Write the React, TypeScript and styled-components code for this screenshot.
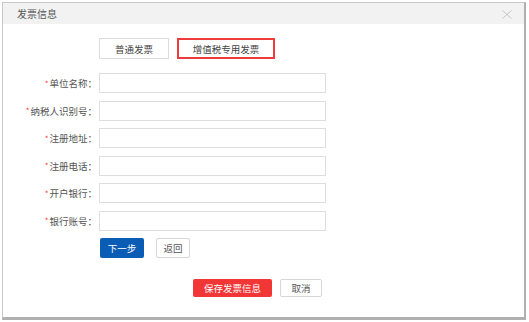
import React from "react";
import styled, { createGlobalStyle } from "styled-components";

const GlobalStyle = createGlobalStyle`
  html, body { margin: 0; padding: 0; background: #ffffff; }
  body { font-family: "Noto Sans CJK SC", "Noto Sans", sans-serif; }
  * { box-sizing: border-box; }
`;

const Page = styled.div`
  width: 529px;
  height: 322px;
  padding: 2px 3px 0 2px;
  background: #ffffff;
`;

const Dialog = styled.div`
  width: 524px;
  height: 318px;
  border: 1px solid #c8c8c8;
  border-right: 2px solid #b0b0b0;
  border-bottom: 3px solid #b0b0b0;
  background: #ffffff;
  display: flex;
  flex-direction: column;
`;

const Header = styled.div`
  height: 21px;
  background: #f2f2f2;
  display: flex;
  align-items: center;
  justify-content: space-between;
  padding: 0 12px 0 14px;
`;

const Title = styled.span`
  font-size: 10px;
  color: #555555;
  line-height: 1;
`;

const Close = styled.svg`
  width: 10px;
  height: 9px;
  margin-top: 2px;
`;

const Tabs = styled.div`
  display: flex;
  gap: 8px;
  margin: 14px 0 0 96px;
`;

const Tab = styled.div<{ $active?: boolean }>`
  height: 21px;
  width: ${(p) => (p.$active ? "98px" : "70px")};
  border: ${(p) => (p.$active ? "2px solid #ee3b3b" : "1px solid #dcdcdc")};
  display: flex;
  align-items: center;
  justify-content: center;
  font-size: 9.5px;
  color: #444444;
  background: #ffffff;
`;

const Form = styled.div`
  display: grid;
  grid-template-columns: 94px 227px;
  column-gap: 2px;
  row-gap: 7.6px;
  margin-top: 14px;
`;

const Label = styled.label`
  height: 20px;
  display: flex;
  align-items: center;
  justify-content: flex-end;
  font-size: 9.5px;
  color: #555555;
  white-space: nowrap;
`;

const Star = styled.span`
  color: #f03c3c;
  font-size: 8px;
  margin-right: 1px;
`;

const Input = styled.div`
  height: 20px;
  border: 1px solid #dedede;
  background: #ffffff;
`;

const StepRow = styled.div`
  display: flex;
  gap: 12px;
  margin: 7px 0 0 97px;
`;

const Btn = styled.div<{ $variant: "blue" | "red" | "plain"; $w: number; $h: number }>`
  width: ${(p) => p.$w}px;
  height: ${(p) => p.$h}px;
  border-radius: 2px;
  display: flex;
  align-items: center;
  justify-content: center;
  font-size: 9.5px;
  background: ${(p) =>
    p.$variant === "blue" ? "#0b5cb5" : p.$variant === "red" ? "#f23535" : "#ffffff"};
  color: ${(p) => (p.$variant === "plain" ? "#555555" : "#ffffff")};
  border: ${(p) => (p.$variant === "plain" ? "1px solid #d6d6d6" : "none")};
`;

const Footer = styled.div`
  display: flex;
  gap: 8px;
  margin: 21px 0 0 190px;
`;

const fields = [
  "单位名称",
  "纳税人识别号",
  "注册地址",
  "注册电话",
  "开户银行",
  "银行账号",
];

export default function App() {
  return (
    <>
      <GlobalStyle />
      <Page>
        <Dialog>
          <Header>
            <Title>发票信息</Title>
            <Close viewBox="0 0 10 9">
              <path d="M0.5 0.5 L9.5 8.5 M9.5 0.5 L0.5 8.5" stroke="#c4c4c4" strokeWidth="1" fill="none" />
            </Close>
          </Header>
          <Tabs>
            <Tab>普通发票</Tab>
            <Tab $active>增值税专用发票</Tab>
          </Tabs>
          <Form>
            {fields.map((f) => (
              <React.Fragment key={f}>
                <Label>
                  <Star>*</Star>
                  {f}：
                </Label>
                <Input />
              </React.Fragment>
            ))}
          </Form>
          <StepRow>
            <Btn $variant="blue" $w={44} $h={20}>下一步</Btn>
            <Btn $variant="plain" $w={34} $h={20}>返回</Btn>
          </StepRow>
          <Footer>
            <Btn $variant="red" $w={79} $h={18}>保存发票信息</Btn>
            <Btn $variant="plain" $w={42} $h={18}>取消</Btn>
          </Footer>
        </Dialog>
      </Page>
    </>
  );
}
